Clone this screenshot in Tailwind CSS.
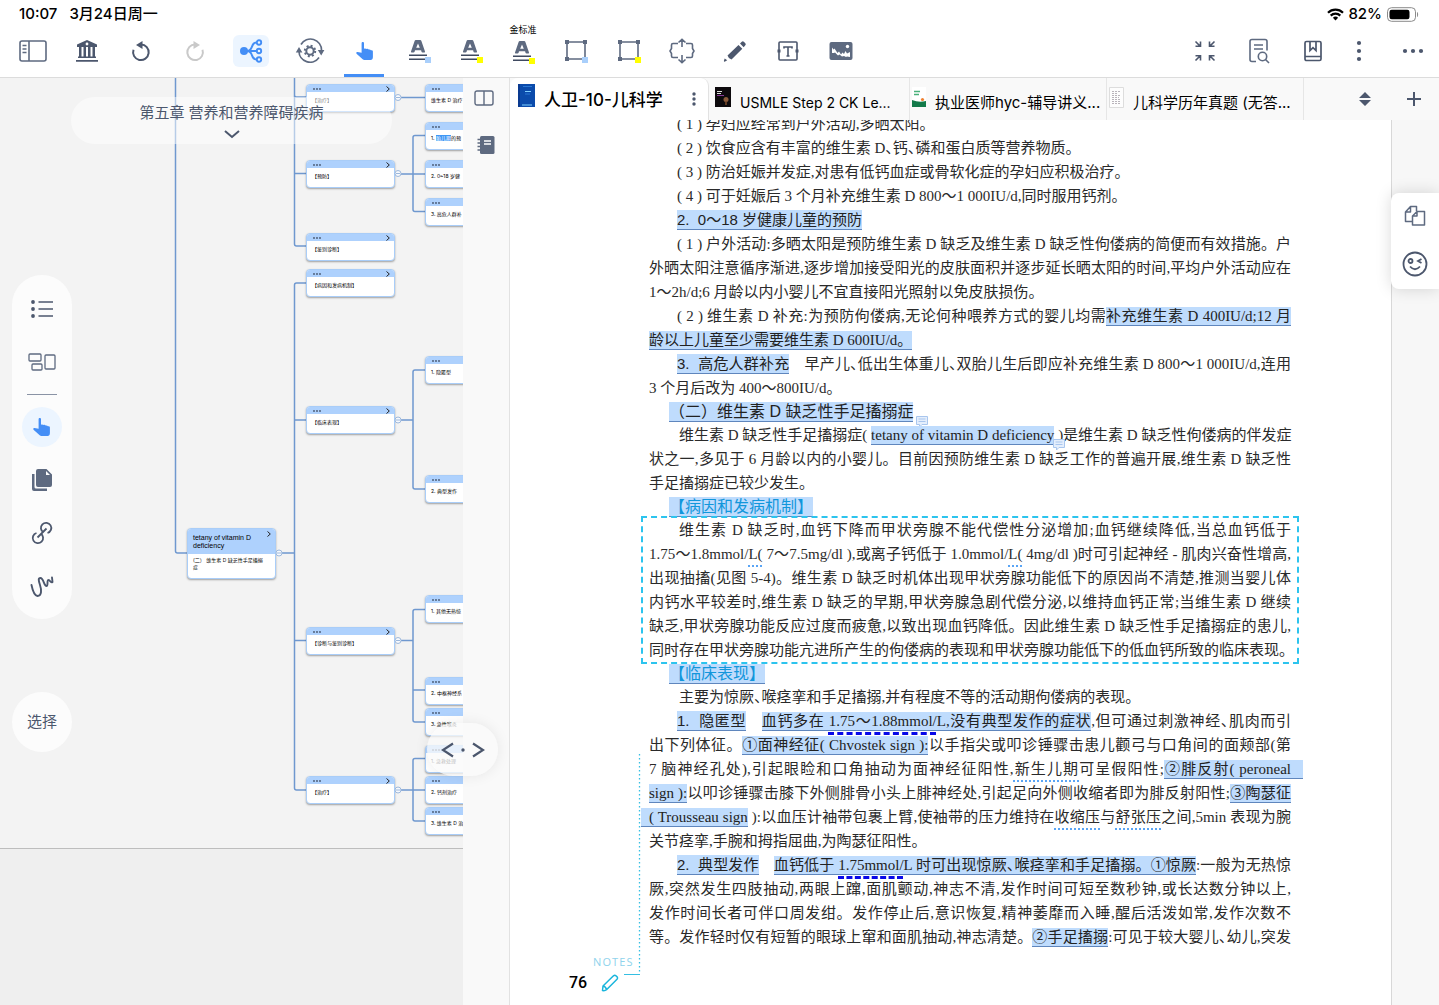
<!DOCTYPE html>
<html lang="zh-CN">
<head>
  <meta charset="UTF-8">
  <meta name="viewport" content="width=device-width, initial-scale=1.0">
  <title>人卫-10-儿科学</title>
  <script src="https://cdn.jsdelivr.net/npm/@tailwindcss/browser@4"></script>
</head>
<body class="flex h-screen flex-col overflow-hidden bg-white font-['Inter','Noto_Sans_CJK_SC',sans-serif] text-black">

  <!-- shared shapes -->
  <svg class="hidden">
    <symbol id="hand" viewBox="0 0 18 18"><path fill="#448ef6" d="M5.6 1.3C5.6.5 6.100 0 6.800 0S8 .5 8 1.300V6.800C8.700 6.200 10 6.300 10.400 7.100c.8-.5 1.900-.2 2.300.5.800-.4 1.900-.1 2.200.7 1-.3 2 .2 2 1.300V15c0 1.700-.8 3-2.300 3H9c-1.100 0-1.800-.3-2.600-1.100L.8 12C-.2 11 .4 9.900 1.600 10l4 .7Z"/></symbol>
    <symbol id="letter-mark" viewBox="0 0 24 24"><path fill="#5e6a80" fill-rule="evenodd" d="M8.800 1h4.400q.8 0 1.100.8L18 12.500q.3 1-.7 1h-1.800q-.8 0-1-.8l-.4-1.400H8l-.4 1.400q-.3.800-1.100.8H4.700q-1 0-.7-1L7.700 1.800Q8 1 8.800 1ZM11 4.500 9.200 8.700h3.600Z"/><path stroke="#3f4a60" stroke-width="1.600" d="M2 16.300h18M2 20.300h17"/></symbol>
    <symbol id="frame" viewBox="0 0 24 24"><path fill="none" stroke="#5e6a80" stroke-width="1.600" d="M3 3h18v17H3z"/><path fill="#5e6a80" d="M1 1h4v4H1zM19 1h4v4h-4zM1 18h4v4H1z"/></symbol>
  </svg>

  <header class="shrink-0 border-b border-[#dcdcdc]">
    <div class="flex h-7 items-center pl-[19px] pr-5 text-[15px] font-medium">
      <span>10:07</span>
      <span class="ml-3">3月24日周一</span>
      <svg class="ml-auto mr-1" width="17" height="13" viewBox="0 0 17 13"><g fill="none" stroke="#000" stroke-width="2.200"><path d="M1 4.800a10.600 10.600 0 0 1 15 0"/><path d="M3.700 7.600a6.800 6.800 0 0 1 9.600 0"/></g><path d="M5.900 9.700a3.800 3.800 0 0 1 5.200 0L8.500 12.500Z"/></svg>
      <span>82%</span>
      <svg class="ml-1" width="33" height="15" viewBox="0 0 33 15"><rect x="1.500" y=".7" width="28" height="13.600" rx="4" fill="none" stroke="#8a8a8a"/><rect x="3.500" y="2.700" width="20" height="9.600" rx="2.200"/><path fill="#8a8a8a" d="M31 5c1.500.5 1.500 4.500 0 5Z"/></svg>
    </div>

    <nav class="flex h-[49px] pb-1 pl-[6px]">
      <button aria-label="侧栏" class="flex w-[54px] items-center justify-center"><svg width="28" height="22" viewBox="0 0 28 22" fill="none" stroke="#5e6a80" stroke-width="1.600"><rect x="1" y="1" width="26" height="20" rx="2"/><path d="M10 1v20M3.500 5.500h4M3.500 9h4M3.500 12.500h4"/></svg></button>
      <button aria-label="书库" class="flex w-[54px] items-center justify-center"><svg width="24" height="24" viewBox="0 0 24 24" fill="#4c576d"><path fill-rule="evenodd" d="M12 1 22 5.500V8H2V5.500ZM12 3.600a1.400 1.400 0 1 0 0 2.800 1.400 1.400 0 0 0 0-2.800Z"/><path d="M4 8h2.500v10H4zM8.500 8H11v10H8.500zM13 8h2.500v10H13zM17.500 8H20v10h-2.500zM3 17.500h18V19H3zM1 21h22v1.700H1z"/></svg></button>
      <button aria-label="撤销" class="flex w-[54px] items-center justify-center"><svg width="20" height="22" viewBox="0 0 20 22"><path fill="none" stroke="#4c576d" stroke-width="2" d="M2.500 9.800A7.800 7.800 0 1 0 10 4.500"/><path fill="#4c576d" d="M11.500 1v8L5 5Z"/></svg></button>
      <button aria-label="重做" class="flex w-[54px] items-center justify-center"><svg width="20" height="22" viewBox="0 0 20 22"><path fill="none" stroke="#c9c9c9" stroke-width="2" d="M17.500 9.800A7.800 7.800 0 1 1 10 4.500"/><path fill="#c9c9c9" d="M8.500 1v8L15 5Z"/></svg></button>
      <button aria-label="脑图" class="flex w-[58px] items-center justify-center"><span class="flex h-8 w-9 items-center justify-center rounded-md bg-[#ecf5ff]"><svg width="24" height="24" viewBox="0 0 24 24" fill="none" stroke="#448ef6" stroke-width="1.900"><circle cx="5" cy="12" r="4" fill="#448ef6" stroke="none"/><path d="M8 12h10M8 12c7 0 3-8.500 9.500-8.500M8 12c7 0 3 8.500 9.500 8.500"/><circle cx="20" cy="3.500" r="2.200"/><circle cx="20" cy="12" r="2.200"/><circle cx="20" cy="20.500" r="2.200"/></svg></span></button>
      <button aria-label="复习" class="flex w-[60px] items-center justify-center"><svg width="30" height="26" viewBox="0 0 30 26"><path fill="none" stroke="#5e6a80" stroke-width="1.700" d="M6 6.500a11 11 0 0 1 20.500 6M24 19.500A11 11 0 0 1 4 13"/><path fill="#5e6a80" d="M.8 14.500h6.600L4 9ZM22.800 12h6.600L26.200 17.500Z"/><circle cx="15" cy="13" r="3.700" fill="none" stroke="#5e6a80" stroke-width="2"/><circle cx="15" cy="13" r="5.200" fill="none" stroke="#5e6a80" stroke-width="2" stroke-dasharray="2 2.080"/></svg></button>
      <button aria-label="手形" class="relative flex w-[49px] items-center justify-center"><svg width="18" height="18"><use href="#hand"/></svg><span class="absolute -bottom-1 left-1 h-[3px] w-10 bg-[#448ef6]"></span></button>
      <div class="flex pl-1">
        <button aria-label="下划线 蓝" class="flex w-[52px] items-center justify-center"><span class="relative"><svg width="24" height="24"><use href="#letter-mark"/></svg><span class="absolute bottom-0 right-0 size-[6px] bg-[#a9cffb]"></span></span></button>
        <button aria-label="下划线 黄" class="flex w-[52px] items-center justify-center"><span class="relative"><svg width="24" height="24"><use href="#letter-mark"/></svg><span class="absolute bottom-0 right-0 size-[6px] bg-[#ffff00]"></span></span></button>
        <button class="relative flex w-[52px] items-center justify-center"><span class="absolute -top-1 text-[9px] leading-3">金标准</span><span class="relative top-px"><svg width="24" height="24"><use href="#letter-mark"/></svg><span class="absolute bottom-0 right-0 size-[6px] bg-[#ffff00]"></span></span></button>
      </div>
      <button aria-label="框选 蓝" class="flex w-[53px] items-center justify-center"><span class="relative"><svg width="24" height="24"><use href="#frame"/></svg><span class="absolute bottom-0 right-0 size-[6px] bg-[#a9cffb]"></span></span></button>
      <button aria-label="框选 黄" class="flex w-[53px] items-center justify-center"><span class="relative"><svg width="24" height="24"><use href="#frame"/></svg><span class="absolute bottom-0 right-0 size-[6px] bg-[#ffff00]"></span></span></button>
      <button aria-label="展开" class="flex w-[53px] items-center justify-center"><svg width="26" height="26" viewBox="0 0 26 26" fill="none" stroke="#5e6a80" stroke-width="1.600"><path d="M9 5.500H4q-1.500 0-1.500 1.500v3.500L1 13l1.500 2.500V18q0 1.500 1.500 1.500h5M17 5.500h5q1.500 0 1.500 1.500v3.500L25 13l-1.500 2.500V18q0 1.500-1.500 1.500h-5M13 9V1.500M9.500 4.500 13 1.300l3.500 3.200M13 17v7.500M9.500 21.500l3.500 3.200 3.500-3.200"/></svg></button>
      <button aria-label="画笔" class="flex w-[53px] items-center justify-center"><svg width="24" height="24" viewBox="0 0 24 24" fill="#4c576d"><path d="m4.500 16.500 11-10.500 3.800 3.800L8.500 20.500Q5.500 19.800 4.500 16.500ZM17 4.600l1.800-1.800q1-1 2 0l1.500 1.500q1 1 0 2L20.700 8.200ZM1.700 19.500l2.500 1.800-2.500 1.500q-1 0-.8-1Z"/></svg></button>
      <button aria-label="文本框" class="flex w-[53px] items-center justify-center"><svg width="22" height="22" viewBox="0 0 22 22" fill="none" stroke="#4c576d" stroke-width="1.600"><rect x="2" y="2" width="18" height="18" rx="1"/><path d="M7 8.500V7h8v1.500M11 7v9M9.500 16h3"/><path stroke-width="3" d="M.5 11h3M18.500 11h3"/></svg></button>
      <button aria-label="图片" class="flex w-[53px] items-center justify-center"><svg width="24" height="20" viewBox="0 0 24 20"><rect x=".5" y="1" width="23" height="18" rx="2" fill="#5e6a80"/><path fill="#fff" d="M3 6.500l1.500 2 1-1 3 4.500 1.500-1.500 2 3 1.500-2 1.500 1.500 1.500-3 1.500 2.500 3-1.500v5l-3-.5-1 .5-2-1-2 .5-2.500-2-1.500 1-3-3-1 .5L3 12Z"/><circle cx="18.500" cy="5.500" r="1.700" fill="#fff"/></svg></button>

      <div class="ml-auto flex">
        <button aria-label="收缩" class="flex w-[54px] items-center justify-center"><svg width="22" height="22" viewBox="0 0 22 22" fill="none" stroke="#4c576d" stroke-width="1.600"><path d="m1.500 1.500 4.500 4.500M1.500 6.300h5V1.500M20.500 1.500 16 6M20.500 6.300h-5V1.500M1.500 20.500 6 16M1.500 15.700h5v4.800M20.500 20.500 16 16M20.500 15.700h-5v4.800"/></svg></button>
        <button aria-label="查找" class="flex w-[54px] items-center justify-center"><svg width="22" height="26" viewBox="0 0 22 26" fill="none" stroke="#5e6a80" stroke-width="1.600"><path d="M8 23.500H4Q2 23.500 2 21.500v-18Q2 1.500 4 1.500h13q2 0 2 2v9M6 7h9M6 11h9"/><circle cx="14.500" cy="18.500" r="4.200"/><path d="m17.500 21.500 3.500 3.500"/></svg></button>
        <button aria-label="书签" class="flex w-[54px] items-center justify-center"><svg width="20" height="22" viewBox="0 0 20 22" fill="none" stroke="#4c576d" stroke-width="1.700"><rect x="2" y="1.500" width="16" height="19" rx="1.500"/><path d="M2 16.500h16M7 2v8.500l3-2.800 3 2.800V2"/></svg></button>
        <button aria-label="选项" class="flex w-[38px] items-center justify-center"><svg width="6" height="22" viewBox="0 0 6 22" fill="#4c576d"><circle cx="3" cy="3" r="2.100"/><circle cx="3" cy="11" r="2.100"/><circle cx="3" cy="19" r="2.100"/></svg></button>
        <button aria-label="更多" class="flex w-[61px] items-center justify-center pl-2"><svg width="22" height="6" viewBox="0 0 22 6" fill="#4c576d"><circle cx="3" cy="3" r="2.100"/><circle cx="11" cy="3" r="2.100"/><circle cx="19" cy="3" r="2.100"/></svg></button>
      </div>
    </nav>
  </header>

  <main class="relative flex min-h-0 flex-1">

    <!-- mind map -->
    <section id="map" class="relative w-[463px] shrink-0 overflow-hidden bg-[#f3f3f3]">
      <div class="absolute inset-x-0 bottom-0 top-[770px] border-t border-[#bdbdbd] bg-[#efefef]"></div>
      <svg class="absolute left-0 top-0" width="463" height="927" viewBox="0 78 463 927" fill="none" stroke="#6f98cf" stroke-width="1.500">
        <path d="M175.500 78V551q0 2 2 2H188M294.500 78V244q0 2 2 2H306M294.500 95q0 2 2 2H306M294.500 173.500H306"/>
        <path d="M281 553H294.500M306 283h-9.500q-2 0-2 2V788q0 2 2 2H306M294.500 420H306M294.500 640.500H306"/>
        <path d="M401 97.500H425M401 174H425M425 135.500h-10q-2 0-2 2V209.500q0 2 2 2h10"/>
        <path d="M401 420h12M425 370h-10q-2 0-2 2V487q0 2 2 2h10"/>
        <path d="M401 640.500h12M425 609.500h-10q-2 0-2 2V720q0 2 2 2h10M413 690h12"/>
        <path d="M401 790H425M425 758.500h-10q-2 0-2 2V819q0 2 2 2h10"/>
      </svg>
      <div id="nodes"></div>
      <svg class="absolute left-0 top-0" width="463" height="927" viewBox="0 78 463 927" fill="#f7f9fc" stroke="#9db8dc">
        <path d="M276 553h6M395 97.500h6M395 173.500h6M395 420h6M395 640.500h6M395 790h6"/>
        <g><circle cx="279" cy="553" r="3"/><circle cx="398" cy="97.500" r="3"/><circle cx="398" cy="173.500" r="3"/><circle cx="398" cy="420" r="3"/><circle cx="398" cy="640.500" r="3"/><circle cx="398" cy="790" r="3"/></g>
        <path d="M277 553h4M396 97.500h4M396 173.500h4M396 420h4M396 640.500h4M396 790h4"/>
      </svg>

      <button class="absolute left-[71px] top-[19px] flex h-[47px] w-[321px] flex-col items-center rounded-full bg-white/50 pt-[5px] text-[15px] leading-[22px] text-[#4c576d]">
        第五章 营养和营养障碍疾病
        <svg class="mt-[6px]" width="16" height="9" viewBox="0 0 16 9" fill="none" stroke="#4c576d" stroke-width="2"><path d="m1 1 7 6 7-6"/></svg>
      </button>

      <div class="absolute left-3 top-[197px] flex h-[344px] w-[60px] flex-col items-center rounded-full bg-[#fcfcfc]">
        <button aria-label="大纲" class="mt-[7px] flex h-[53px] items-center"><svg width="22" height="20" viewBox="0 0 22 20" fill="none" stroke="#4c576d" stroke-width="1.700"><path d="M7.500 3H22M7.500 10H22M7.500 17H22"/><g fill="#4c576d" stroke="none"><circle cx="2" cy="3" r="1.900"/><circle cx="2" cy="10" r="1.900"/><circle cx="2" cy="17" r="1.900"/></g></svg></button>
        <button aria-label="卡片" class="flex h-[53px] items-center"><svg width="28" height="18" viewBox="0 0 28 18" fill="none" stroke="#5e6a80" stroke-width="1.300"><rect x="1" y="1" width="12" height="7" rx="1"/><rect x="4" y="11" width="10" height="6" rx="1"/><rect x="17" y="2" width="10" height="14" rx="1"/></svg></button>
        <div class="mt-[6px] w-[30px] border-t border-[#8a93a5]"></div>
        <button aria-label="手形工具" class="mt-3 flex size-10 items-center justify-center rounded-full bg-[#ecf5ff]"><svg width="18" height="18"><use href="#hand"/></svg></button>
        <button aria-label="复制" class="mt-[6px] flex h-[53px] items-center"><svg width="22" height="24" viewBox="0 0 22 24" fill="#5e6a80"><path fill-rule="evenodd" d="M7 1h8.500L21 6.500V17q0 2-2 2H7q-2 0-2-2V3q0-2 2-2Zm8 2v4h4Z"/><path d="M1 6h2.500v13q0 1.500 1.500 1.500h11V23H3q-2 0-2-2Z"/></svg></button>
        <button aria-label="链接" class="flex h-[53px] items-center"><svg width="24" height="24" viewBox="0 0 24 24" fill="none" stroke="#4c576d" stroke-width="1.800"><path d="M7.500 16.500 16.500 7.500M13.500 11.500A5.200 5.200 0 1 1 17.500 12M10.500 12.500A5.200 5.200 0 1 1 6.500 12"/></svg></button>
        <button aria-label="手绘" class="flex h-[53px] items-center"><svg width="24" height="24" viewBox="0 0 24 24" fill="none" stroke="#4c576d" stroke-width="1.900" stroke-linecap="round" stroke-linejoin="round"><path d="M1.500 11c1 5 3 10.500 6 11 4.500 0 4-6.500 2.500-11S8 4 10.500 4c3 0 3.500 8 6 8 2 0 0-6 2-6s1.500 3 4 2l-.5-4.500"/></svg></button>
      </div>
      <button class="absolute left-3 top-[614px] size-[60px] rounded-full bg-[#fcfcfc] text-[15px] text-[#4c576d]">选择</button>
    </section>

    <!-- view switcher -->
    <aside class="flex w-[47px] shrink-0 flex-col items-center border-r border-[#e2e2e2] bg-[#f9f9f9] pt-[12px]">
      <button aria-label="分栏"><svg class="mr-1" width="20" height="17" viewBox="0 0 20 17" fill="none" stroke="#5e6a80" stroke-width="1.400"><rect x="1" y="1" width="18" height="14" rx="2"/><path d="M10 1v14"/></svg></button>
      <button aria-label="笔记本" class="mt-7"><svg width="18" height="20" viewBox="0 0 18 20"><rect x="3" y="1" width="14.500" height="18" rx="1.500" fill="#5e6a80"/><path stroke="#fff" stroke-width="1.300" d="M7 6h7M7 9h7"/><path stroke="#5e6a80" stroke-width="1.300" d="M.5 4.500H4M.5 8H4M.5 11.500H4M.5 15H4"/></svg></button>
    </aside>

    <!-- split handle over both panes -->
    <button aria-label="调整分栏" class="absolute left-[427px] top-[645px] z-10 flex h-[53px] w-[71px] items-center justify-center rounded-full bg-[#f9f9f9]/75 shadow-[0_0_14px_rgba(0,0,0,0.08)]"><svg width="44" height="16" viewBox="0 0 44 16" fill="none" stroke="#4c576d" stroke-width="2.200"><path d="M12 1.500 2 8l10 6.500M32 1.500 42 8 32 14.500"/><circle cx="22" cy="8" r="1.700" fill="#4c576d" stroke="none"/></svg></button>

    <section class="flex min-w-0 flex-1 flex-col">
      <div class="flex h-[42px] shrink-0 bg-[#f9f9f9] text-[15px]">
        <div class="flex w-[199px] items-center rounded-t-lg border-r border-[#e2e2e2] bg-white pl-2 pr-3">
          <svg class="mb-2 shrink-0" width="17" height="23" viewBox="0 0 17 23"><path fill="#0b4bab" d="M0 0h17v23H0z"/><path fill="#0a3a90" d="M0 0h2v23H0z"/><path stroke="#7fd0ff" d="M7 7.500h6M4 21h10"/><path stroke="#2a78d4" d="M7 10h5M5 2.500h9"/></svg>
          <a href="#" class="ml-[9px] mt-1 whitespace-nowrap text-[17px] font-medium">人卫-10-儿科学</a>
          <button aria-label="标签选项" class="ml-auto"><svg width="4" height="14" viewBox="0 0 4 14" fill="#4c576d"><circle cx="2" cy="2" r="1.700"/><circle cx="2" cy="7" r="1.700"/><circle cx="2" cy="12" r="1.700"/></svg></button>
        </div>
        <div class="flex w-[201px] items-center border-r border-[#e6e6e6] pl-[6px]">
          <svg class="mb-1 shrink-0" width="16" height="20" viewBox="0 0 16 20"><path fill="#0d0a0d" d="M0 0h16v20H0z"/><path stroke="#ddd" d="M2 4.500h5M2 6.500h4"/><path stroke="#8a3a9a" d="M2 8.500h7"/><circle cx="11" cy="12.500" r="2.500" fill="#8a5a3a"/><path stroke="#7a4a2a" stroke-width="1.500" d="M11 14v4"/></svg>
          <a href="#" class="ml-[9px] mt-2 whitespace-nowrap text-sm">USMLE Step 2 CK Le...</a>
        </div>
        <div class="flex w-[197px] items-center border-r border-[#e6e6e6] pl-[2px]">
          <svg class="mb-1 shrink-0" width="14" height="20" viewBox="0 0 14 20"><path fill="#fff" d="M0 0h14v20H0z"/><path fill="#137a4a" d="M0 13q7 3 14 1v6H0z"/><path stroke="#48b07a" stroke-width="1.500" d="M2 4.500h6M2 7.500h5"/><circle cx="10.500" cy="12.500" r="1.600" fill="#f08030"/></svg>
          <a href="#" class="ml-[9px] mt-2 whitespace-nowrap">执业医师hyc-辅导讲义...</a>
        </div>
        <div class="flex w-[197px] items-center border-r border-[#e6e6e6] pl-[2px]">
          <svg class="mb-1 shrink-0" width="15" height="21" viewBox="0 0 15 21"><path fill="#fdfdfd" stroke="#ddd" d="M.5.500h14v20H.5z"/><path stroke="#b9b4bb" stroke-dasharray="2 1" d="M3 4.500h9M3 6.500h5M3 8.500h9M3 10.500h7M3 12.500h9M3 14.500h8M3 16.500h9"/></svg>
          <a href="#" class="ml-[9px] mt-2 whitespace-nowrap">儿科学历年真题 (无答...</a>
        </div>
        <button aria-label="排序" class="ml-auto"><svg width="12" height="14" viewBox="0 0 12 14" fill="#4c576d"><path d="M6 0 12 6H0ZM6 14 0 8h12Z"/></svg></button>
        <button aria-label="新标签" class="ml-9 mr-[18px]"><svg width="14" height="14" viewBox="0 0 14 14" stroke="#4c576d" stroke-width="2"><path d="M7 0v14M0 7h14"/></svg></button>
      </div>

      <div class="relative flex min-h-0 flex-1">
        <article class="relative min-w-0 flex-1 overflow-hidden bg-white pl-[139px] pr-[100px] font-['Liberation_Serif','Noto_Sans_CJK_SC',serif] text-[15px] leading-6 text-[#2a2a2a]">
          <div class="-mt-2 [&_i]:not-italic [&_i]:[font-feature-settings:'halt'] [&_p]:whitespace-nowrap [&_mark]:border-b [&_mark]:border-[#5f86bd] [&_mark]:bg-[#bfdcfd] [&_mark]:py-px [&_mark]:text-[#222]">
            <p class="indent-7">( 1 ) 孕妇应经常到户外活动,多晒太阳。</p>
            <p class="indent-7">( 2 ) 饮食应含有丰富的维生素 D<i>、</i>钙<i>、</i>磷和蛋白质等营养物质。</p>
            <p class="indent-7">( 3 ) 防治妊娠并发症,对患有低钙血症或骨软化症的孕妇应积极治疗。</p>
            <p class="indent-7">( 4 ) 可于妊娠后 3 个月补充维生素 D 800～1 000IU/d,同时服用钙剂。</p>
            <h3 class="pl-7 font-['Liberation_Sans','Noto_Sans_CJK_SC',sans-serif]"><mark>2.&nbsp; 0～18 岁健康儿童的预防</mark></h3>
            <p class="indent-7 [text-align-last:justify]">( 1 ) 户外活动:多晒太阳是预防维生素 D 缺乏及维生素 D 缺乏性佝偻病的简便而有效措施。户</p>
            <p class="[text-align-last:justify]">外晒太阳注意循序渐进,逐步增加接受阳光的皮肤面积并逐步延长晒太阳的时间,平均户外活动应在</p>
            <p>1～2h/d;6 月龄以内小婴儿不宜直接阳光照射以免皮肤损伤。</p>
            <p class="indent-7 [text-align-last:justify]">( 2 ) 维生素 D 补充:为预防佝偻病,无论何种喂养方式的婴儿均需<mark>补充维生素 D 400IU/d;12 月</mark></p>
            <p><mark>龄以上儿童至少需要维生素 D 600IU/d。</mark></p>
            <p class="indent-7 [text-align-last:justify]"><mark class="font-['Liberation_Sans','Noto_Sans_CJK_SC',sans-serif]">3.&nbsp; 高危人群补充</mark>　早产儿<i>、</i>低出生体重儿<i>、</i>双胎儿生后即应补充维生素 D 800～1 000IU/d,连用</p>
            <p>3 个月后改为 400～800IU/d。</p>
            <h2 class="relative pl-5 font-['Liberation_Sans','Noto_Sans_CJK_SC',sans-serif] text-base leading-[23px]"><mark>（二）维生素 D 缺乏性手足搐搦症</mark><svg class="absolute left-[267px] top-4" width="12" height="12" viewBox="0 0 12 12" fill="#e4eefc" stroke="#a9c6ee"><path d="M.500.500h11v8H6L3.500 11V8.500h-3zM2.500 3h7M2.500 5.500h7"/></svg></h2>
            <p class="relative indent-[30px] [text-align-last:justify]">维生素 D 缺乏性手足搐搦症( <mark>tetany of vitamin D deficiency</mark> )是维生素 D 缺乏性佝偻病的伴发症<svg class="absolute left-[404px] top-4" width="12" height="12" viewBox="0 0 12 12" fill="#e4eefc" stroke="#a9c6ee"><path d="M.500.500h11v8H6L3.500 11V8.500h-3zM2.500 3h7M2.500 5.500h7"/></svg></p>
            <p class="[text-align-last:justify]">状之一,多见于 6 月龄以内的小婴儿。目前因预防维生素 D 缺乏工作的普遍开展,维生素 D 缺乏性</p>
            <p>手足搐搦症已较少发生。</p>
            <h3 class="pl-5 font-['Liberation_Sans','Noto_Sans_CJK_SC',sans-serif] text-base leading-[23px]"><mark class="!text-[#1296db]">【病因和发病机制】</mark></h3>
            <div class="-mx-1.5 px-1.5 outline-2 outline-dashed outline-[#2cc4ee]">
              <p class="indent-[30px] [text-align-last:justify]">维生素 D 缺乏时,血钙下降而甲状旁腺不能代偿性分泌增加;血钙继续降低,当总血钙低于</p>
              <p class="[text-align-last:justify]">1.75～1.8mmol/<span class="underline decoration-[#5aa5f5] decoration-dotted decoration-2 underline-offset-6">L(</span> 7～7.5mg/dl ),或离子钙低于 1.0mmol/<span class="underline decoration-[#5aa5f5] decoration-dotted decoration-2 underline-offset-6">L(</span> 4mg/dl )时可引起神经 - 肌肉兴奋性增高,</p>
              <p class="[text-align-last:justify]">出现抽搐(见图 5-4)。维生素 D 缺乏时机体出现甲状旁腺功能低下的原因尚不清楚,推测当婴儿体</p>
              <p class="[text-align-last:justify]">内钙水平较差时,维生素 D 缺乏的早期,甲状旁腺急剧代偿分泌,以维持血钙正常;当维生素 D 继续</p>
              <p class="[text-align-last:justify]">缺乏,甲状旁腺功能反应过度而疲惫,以致出现血钙降低。因此维生素 D 缺乏性手足搐搦症的患儿,</p>
              <p class="[text-align-last:justify]">同时存在甲状旁腺功能亢进所产生的佝偻病的表现和甲状旁腺功能低下的低血钙所致的临床表现。</p>
            </div>
            <h3 class="pl-5 font-['Liberation_Sans','Noto_Sans_CJK_SC',sans-serif] text-base leading-[23px]"><mark class="!text-[#1296db]">【临床表现】</mark></h3>
            <p class="indent-[30px]">主要为惊厥<i>、</i>喉痉挛和手足搐搦,并有程度不等的活动期佝偻病的表现。</p>
            <p class="indent-7 [text-align-last:justify]"><mark class="font-['Liberation_Sans','Noto_Sans_CJK_SC',sans-serif]">1.&nbsp; 隐匿型</mark>　<mark>血钙多在 <span class="underline decoration-[#0808e8] decoration-dashed decoration-3 underline-offset-6">1.75～1.88mmol/</span>L,没有典型发作的症状</mark>,但可通过刺激神经<i>、</i>肌肉而引</p>
            <p class="[text-align-last:justify]">出下列体征。<mark>①面神经征( Chvostek sign ):</mark>以手指尖或叩诊锤骤击患儿颧弓与口角间的面颊部(第</p>
            <p class="[text-align-last:justify]">7 脑神经孔处),引起眼睑和口角抽动为面神经征阳性,<span class="underline decoration-[#5aa5f5] decoration-dotted decoration-2 underline-offset-6">新生儿期</span>可呈假阳性;<mark class="-mr-3 pr-3">②腓反射( peroneal</mark></p>
            <p class="[text-align-last:justify]"><mark>sign ):</mark>以叩诊锤骤击膝下外侧腓骨小头上腓神经处,引起足向外侧收缩者即为腓反射阳性;<mark>③陶瑟征</mark></p>
            <p class="[text-align-last:justify]"><mark class="-ml-2 pl-2">( Trousseau sign</mark> ):以血压计袖带包裹上臂,使袖带的压力维持在<span class="underline decoration-[#5aa5f5] decoration-dotted decoration-2 underline-offset-6">收缩压</span>与<span class="underline decoration-[#5aa5f5] decoration-dotted decoration-2 underline-offset-6">舒张压</span>之间,5min 表现为腕</p>
            <p>关节痉挛,手腕和拇指屈曲,为陶瑟征阳性。</p>
            <p class="indent-7 [text-align-last:justify]"><mark class="font-['Liberation_Sans','Noto_Sans_CJK_SC',sans-serif]">2.&nbsp; 典型发作</mark>　<mark>血钙低于 <span class="underline decoration-[#0808e8] decoration-dashed decoration-3 underline-offset-6">1.75mmol/</span>L 时可出现惊厥<i>、</i>喉痉挛和手足搐搦。①惊厥</mark>:一般为无热惊</p>
            <p class="[text-align-last:justify]">厥,突然发生四肢抽动,两眼上蹿,面肌颤动,神志不清,发作时间可短至数秒钟,或长达数分钟以上,</p>
            <p class="[text-align-last:justify]">发作时间长者可伴口周发绀。发作停止后,意识恢复,精神萎靡而入睡,醒后活泼如常,发作次数不</p>
            <p class="[text-align-last:justify]">等。发作轻时仅有短暂的眼球上窜和面肌抽动,神志清楚。<mark>②手足搐搦</mark>:可见于较大婴儿<i>、</i>幼儿,突发</p>
          </div>

          <footer class="-ml-20 mt-[7px] w-16 text-black">
            <p class="pl-6 font-['Open_Sans',sans-serif] text-[11px] leading-3 tracking-widest text-[#8fd3ec]">NOTES</p>
            <div class="mt-[3px] flex items-center">
              <span class="font-['Roboto',sans-serif] text-base leading-6 font-medium">76</span>
              <svg class="ml-[14px] shrink-0" width="18" height="18" viewBox="0 0 18 18" fill="none" stroke="#19b5dc" stroke-width="1.500" stroke-linejoin="round"><path d="M1.500 16.500 2 12 12.500 1.800q1.200-1 2.500 0l1 .9q1 1.200 0 2.500L5.500 15.700Q4 17 1.500 16.500ZM2 12q3 .5 3.500 3.700"/></svg>
            </div>
          </footer>
          <svg class="absolute left-[114px] top-[634px]" width="17" height="222" viewBox="0 0 17 222" fill="none" stroke="#35bfe3"><path stroke-dasharray="1.500 2.500" stroke-width="1.300" d="M15.500 0v220"/><path d="M0 220.500h16"/></svg>
        </article>

        <div class="w-12 shrink-0 border-l border-[#d8d8d8] bg-[#f7f7f7]"></div>
        <div class="absolute right-0 top-[73px] flex h-24 w-12 flex-col items-center justify-around rounded-l-lg bg-white shadow-[0_0_16px_rgba(0,0,0,0.15)]">
          <button aria-label="复制页"><svg width="22" height="22" viewBox="0 0 22 22" fill="none" stroke="#5e6a80" stroke-width="1.500" stroke-linejoin="round"><path d="M8 16.500H1.500V7L6.500 1.500h6V6M1.500 7h5V1.500M8.500 11l4.500-4.500h7.500v13.500h-12ZM8.500 11H13V6.500"/></svg></button>
          <button aria-label="表情"><svg width="26" height="26" viewBox="0 0 26 26" fill="none" stroke="#4c576d" stroke-width="1.800"><circle cx="13" cy="13" r="11.500"/><circle cx="8.500" cy="10" r="2"/><path d="m19.500 8-3.500 2 3.500 2M8 15.500q5 5.500 10 0"/></svg></button>
        </div>
      </div>
    </section>
  </main>

  <script>
    // [left, top, text] of every card, top measured inside the map pane
    const cards = [
      [306, 6, '【治疗】'], [306, 82, '【预防】'], [306, 155, '【鉴别诊断】'], [306, 191, '【病因和发病机制】'],
      [306, 328, '【临床表现】'], [306, 549, '【诊断与鉴别诊断】'], [306, 698, '【治疗】'],
      [425, 6, '维生素 D 治疗'], [425, 44, '1. <span class="bg-[#3f97f5] text-white">胎儿期</span>的预'], [425, 82, '2. 0~18 岁健'], [425, 120, '3. 高危人群补'],
      [425, 278, '1. 隐匿型'], [425, 397, '2. 典型发作'],
      [425, 517, '1. 其他无热惊'], [425, 599, '2. 中枢神经系'], [425, 630, '3. 急性喉炎'],
      [425, 667, '1. 急救处理'], [425, 698, '2. 钙剂治疗'], [425, 729, '3. 维生素 D 治'],
    ];

    const arrow = '<svg width="4" height="6" viewBox="0 0 4 6" fill="none" stroke="#222"><path d="M.5.500 3.300 3 .500 5.500"/></svg>';

    let html = cards.map(([x, y, text]) => `
      <div class="absolute h-[28px] w-[89px] overflow-hidden rounded border border-[#a9cdf8] bg-white shadow-[0_1px_2px_rgba(0,0,0,0.35)]" style="left:${x}px;top:${y}px">
        <div class="flex h-[7px] items-center justify-between bg-[#aed1fd] pl-[6px] pr-1">
          <svg width="8" height="2" viewBox="0 0 8 2" fill="#46566e"><circle cx="1" cy="1" r=".9"/><circle cx="4" cy="1" r=".9"/><circle cx="7" cy="1" r=".9"/></svg>
          ${arrow}
        </div>
        <p class="mt-[5px] whitespace-nowrap pl-[5px] text-[5px] leading-[7px]">${text}</p>
      </div>`).join('');

    html += `
      <div class="absolute left-[187px] top-[450px] h-[51px] w-[89px] overflow-hidden rounded border border-[#a9cdf8] bg-white shadow-[0_1px_2px_rgba(0,0,0,0.35)]">
        <div class="flex h-[25px] justify-between bg-[#aed1fd] pl-[5px] pr-1 pt-[2px]">
          <p class="mt-[3px] w-[60px] font-['Liberation_Sans',sans-serif] text-[7px] leading-2">tetany of vitamin D deficiency</p>
          ${arrow}
        </div>
        <p class="mt-[3px] pl-[5px] pr-2 text-[5px] leading-[7px]">(二） 维生素 D 缺乏性手足搐搦症</p>
      </div>`;

    document.getElementById('nodes').innerHTML = html;
  </script>
</body>
</html>
